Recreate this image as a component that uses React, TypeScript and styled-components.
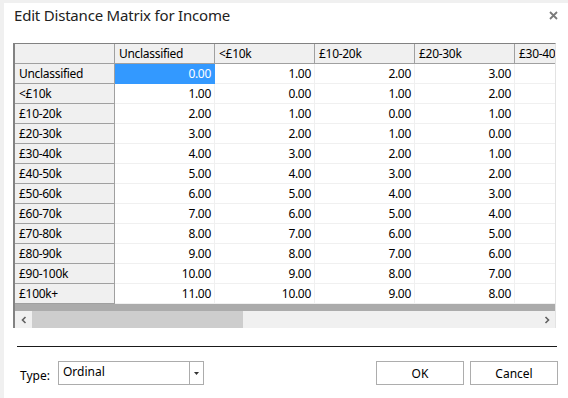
import React from 'react';
import styled, { createGlobalStyle } from 'styled-components';

const GlobalStyle = createGlobalStyle`
  html, body {
    margin: 0;
    padding: 0;
    background: #f0f0f0;
    font-family: "Segoe UI", "Noto Sans", "Open Sans", sans-serif;
    color: #000;
  }
`;

const Dialog = styled.div`
  margin: 3px 0 0 4px;
  width: 564px;
  height: 395px;
  background: #ffffff;
  display: flex;
  flex-direction: column;
  box-sizing: border-box;
`;

const TitleBar = styled.div`
  height: 24px;
  display: flex;
  align-items: center;
  justify-content: space-between;
  padding: 0 10px 0 10px;
`;

const Title = styled.span`
  font-size: 15px;
  color: #222;
  letter-spacing: -0.2px;
`;

const CloseButton = styled.button`
  border: none;
  background: transparent;
  padding: 0;
  width: 10px;
  height: 10px;
  display: flex;
  align-items: center;
  justify-content: center;
  cursor: pointer;
`;

const Grid = styled.div`
  margin: 16px 0 0 9px;
  width: 543px;
  height: 285px;
  box-sizing: border-box;
  border-left: 2px solid #828282;
  border-top: 1px solid #828282;
  border-right: 1px solid #e3e3e3;
  display: flex;
  flex-direction: column;
  overflow: hidden;
`;

const Viewport = styled.div`
  flex: 1;
  background: #ababab;
  overflow: hidden;
  display: flex;
  flex-direction: column;
`;

const Row = styled.div`
  display: flex;
  flex: none;
  height: 20px;
`;

const Cell = styled.div<{ $kind: 'corner' | 'colHead' | 'rowHead' | 'data'; $selected?: boolean }>`
  flex: none;
  width: 100px;
  height: 20px;
  box-sizing: border-box;
  font-size: 12px;
  letter-spacing: -0.3px;
  line-height: 19px;
  white-space: nowrap;
  overflow: hidden;
  padding: ${({ $kind }) => ($kind === 'data' ? '0 3px 0 4px' : '0 4px')};
  text-align: ${({ $kind }) => ($kind === 'data' ? 'right' : 'left')};
  background: ${({ $kind, $selected }) =>
    $selected ? '#3399ff' : $kind === 'data' ? '#ffffff' : '#f0f0f0'};
  color: ${({ $selected }) => ($selected ? '#ffffff' : '#000000')};
  border-right: 1px solid ${({ $kind }) => ($kind === 'data' ? '#f0f0f0' : '#a0a0a0')};
  border-bottom: 1px solid ${({ $kind }) => ($kind === 'data' ? '#f0f0f0' : '#a0a0a0')};
  ${({ $selected }) => ($selected ? 'border-color: #3399ff;' : '')}
`;

const Filler = styled.div`
  flex: 1;
`;

const HScroll = styled.div`
  height: 17px;
  flex: none;
  display: flex;
  background: #f0f0f0;
`;

const ScrollArrow = styled.div`
  width: 17px;
  height: 17px;
  display: flex;
  align-items: center;
  justify-content: center;
`;

const Track = styled.div`
  flex: 1;
  display: flex;
  align-items: center;
`;

const Thumb = styled.div`
  height: 17px;
  background: #cdcdcd;
`;

const Separator = styled.div`
  margin: 18px 0 0 13px;
  width: 540px;
  height: 1px;
  background: #1a1a1a;
`;

const Footer = styled.div`
  margin-top: 14px;
  padding: 0 10px 0 16px;
  display: flex;
  align-items: center;
  height: 24px;
`;

const Label = styled.span`
  font-size: 12px;
  margin-top: 4px;
  width: 38px;
`;

const Combo = styled.div`
  width: 146px;
  height: 24px;
  box-sizing: border-box;
  border: 1px solid #acacac;
  display: flex;
  background: #ffffff;
`;

const ComboText = styled.span`
  flex: 1;
  font-size: 12px;
  padding: 2px 4px;
  line-height: 16px;
`;

const ComboDrop = styled.div`
  width: 13px;
  border-left: 1px solid #acacac;
  display: flex;
  align-items: center;
  justify-content: center;
`;

const Spacer = styled.div`
  flex: 1;
`;

const Button = styled.button`
  width: 88px;
  height: 24px;
  box-sizing: border-box;
  border: 1px solid #adadad;
  background: #ffffff;
  font-family: inherit;
  font-size: 12px;
  color: #000;
  padding: 0;
  margin-left: 6px;
  cursor: pointer;
`;

const labels = [
  'Unclassified', '<£10k', '£10-20k', '£20-30k', '£30-40k', '£40-50k',
  '£50-60k', '£60-70k', '£70-80k', '£80-90k', '£90-100k', '£100k+',
];

const visibleCols = labels.slice(0, 5);

export default function App() {
  return (
    <>
      <GlobalStyle />
      <Dialog>
        <TitleBar>
          <Title>Edit Distance Matrix for Income</Title>
          <CloseButton aria-label="Close">
            <svg width="9" height="9" viewBox="0 0 9 9">
              <path d="M1 1 L8 8 M8 1 L1 8" stroke="#7a7a7a" strokeWidth="1.8" />
            </svg>
          </CloseButton>
        </TitleBar>

        <Grid>
          <Viewport>
            <Row>
              <Cell $kind="corner" />
              {visibleCols.map((c) => (
                <Cell key={c} $kind="colHead">{c}</Cell>
              ))}
            </Row>
            {labels.map((r, i) => (
              <Row key={r}>
                <Cell $kind="rowHead">{r}</Cell>
                {visibleCols.map((c, j) => (
                  <Cell key={c} $kind="data" $selected={i === 0 && j === 0}>
                    {j < 4 ? Math.abs(i - j).toFixed(2) : ''}
                  </Cell>
                ))}
              </Row>
            ))}
            <Filler />
          </Viewport>
          <HScroll>
            <ScrollArrow>
              <svg width="8" height="8" viewBox="0 0 8 8">
                <path d="M5.5 1 L2.5 4 L5.5 7" fill="none" stroke="#606060" strokeWidth="1.6" />
              </svg>
            </ScrollArrow>
            <Track>
              <Thumb style={{ width: 211 }} />
            </Track>
            <ScrollArrow>
              <svg width="8" height="8" viewBox="0 0 8 8">
                <path d="M2.5 1 L5.5 4 L2.5 7" fill="none" stroke="#606060" strokeWidth="1.6" />
              </svg>
            </ScrollArrow>
          </HScroll>
        </Grid>

        <Separator />

        <Footer>
          <Label>Type:</Label>
          <Combo>
            <ComboText>Ordinal</ComboText>
            <ComboDrop>
              <svg width="5" height="3" viewBox="0 0 5 3">
                <path d="M0 0 H5 L2.5 3 Z" fill="#333" />
              </svg>
            </ComboDrop>
          </Combo>
          <Spacer />
          <Button>OK</Button>
          <Button>Cancel</Button>
        </Footer>
      </Dialog>
    </>
  );
}
